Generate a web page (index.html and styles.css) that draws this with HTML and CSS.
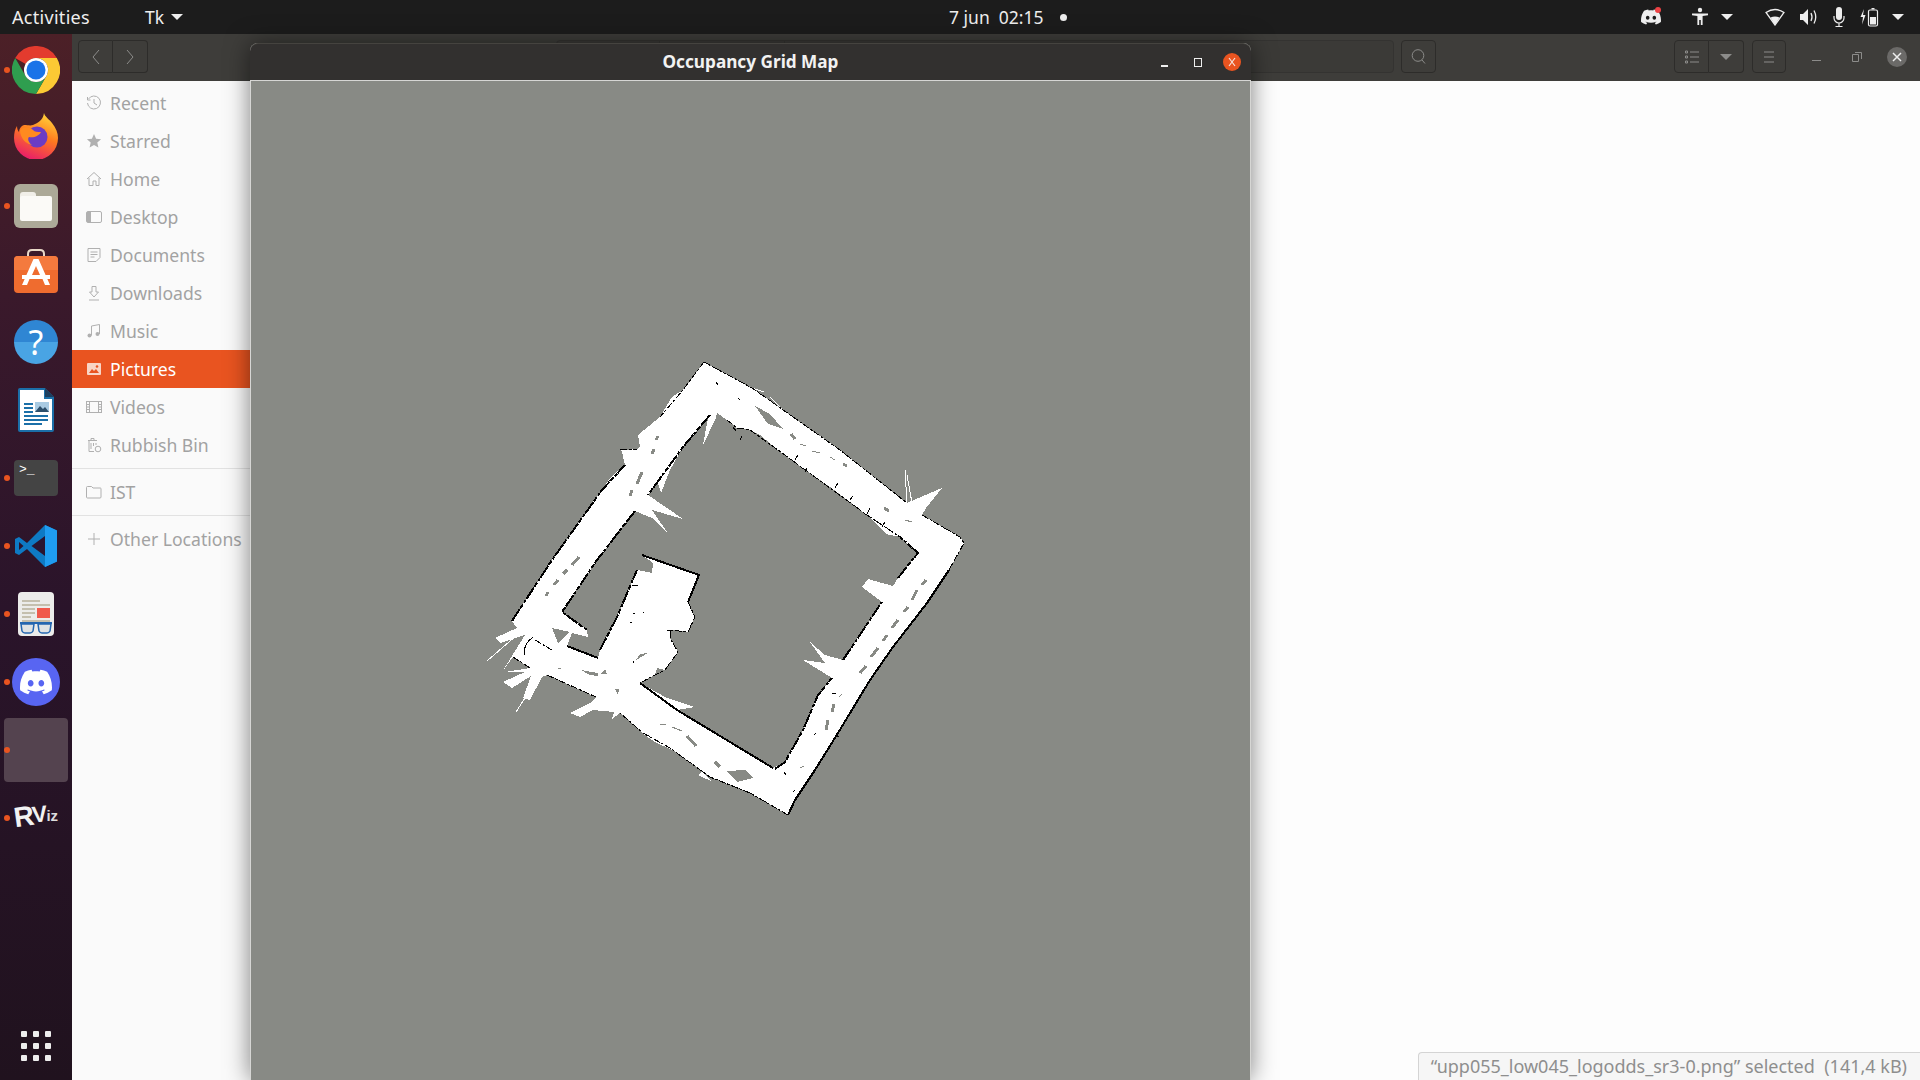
FILE: index.html
```html
<!DOCTYPE html>
<html>
<head>
    <title>Occupancy Grid Map</title>
    <link rel="stylesheet" href="styles.css">
</head>
<body>
    <svg class="defs">
        <symbol id="discord" viewBox="0 0 24 24">
            <path d="M20.317 4.3698a19.7913 19.7913 0 00-4.8851-1.5152.0741.0741 0 00-.0785.0371c-.211.3753-.4447.8648-.6083 1.2495-1.8447-.2762-3.68-.2762-5.4868 0-.1636-.3933-.4058-.8742-.6177-1.2495a.077.077 0 00-.0785-.037 19.7363 19.7363 0 00-4.8852 1.515.0699.0699 0 00-.0321.0277C.5334 9.0458-.319 13.5799.0992 18.0578a.0824.0824 0 00.0312.0561c2.0528 1.5076 4.0413 2.4228 5.9929 3.0294a.0777.0777 0 00.0842-.0276c.4616-.6304.8731-1.2952 1.226-1.9942a.076.076 0 00-.0416-.1057c-.6528-.2476-1.2743-.5495-1.8722-.8923a.077.077 0 01-.0076-.1277c.1258-.0943.2517-.1923.3718-.2914a.0743.0743 0 01.0776-.0105c3.9278 1.7933 8.18 1.7933 12.0614 0a.0739.0739 0 01.0785.0095c.1202.099.246.1981.3728.2924a.077.077 0 01-.0066.1276 12.2986 12.2986 0 01-1.873.8914.0766.0766 0 00-.0407.1067c.3604.698.7719 1.3628 1.225 1.9932a.076.076 0 00.0842.0286c1.961-.6067 3.9495-1.5219 6.0023-3.0294a.077.077 0 00.0313-.0552c.5004-5.177-.8382-9.6739-3.5485-13.6604a.061.061 0 00-.0312-.0286zM8.02 15.3312c-1.1825 0-2.1569-1.0857-2.1569-2.419 0-1.3332.9555-2.4189 2.157-2.4189 1.2108 0 2.1757 1.0952 2.1568 2.419 0 1.3332-.9555 2.4189-2.1569 2.4189zm7.9748 0c-1.1825 0-2.1569-1.0857-2.1569-2.419 0-1.3332.9554-2.4189 2.1569-2.4189 1.2108 0 2.1757 1.0952 2.1568 2.419 0 1.3332-.946 2.4189-2.1568 2.4189Z"/>
        </symbol>
    </svg>

    <div class="topbar">
        <div class="top-left">
            <span class="activities">Activities</span>
            <span class="app-menu">Tk <i class="caret"></i></span>
        </div>
        <div class="clock">7 jun&nbsp; 02:15 <i class="clock-dot"></i></div>
        <div class="tray">
            <span class="tray-discord">
                <svg width="20" height="20" fill="#eee"><use href="#discord"/></svg>
                <i class="tray-badge"></i>
            </span>
            <svg class="tray-access" width="20" height="20" viewBox="0 0 20 20" fill="#eee">
                <circle cx="10" cy="3" r="2.2"/>
                <path d="M2 6.500h16v1.800l-5.400.6V18h-1.800v-5H9.200v5H7.400V8.900L2 8.300z"/>
            </svg>
            <i class="caret tray-caret1"></i>
            <svg class="tray-wifi" width="20" height="18" viewBox="0 0 20 18">
                <path d="M1 4.500Q10-1.500 19 4.500L10 17z" fill="none" stroke="#eee" stroke-width="1.300"/>
                <path d="M5.500 9.500Q10 7.500 14.500 9.500L10 17z" fill="#eee"/>
            </svg>
            <svg class="tray-vol" width="20" height="18" viewBox="0 0 20 18" fill="#eee">
                <path d="M1 6h3l5-5v16l-5-5H1z"/>
                <path d="M12 5q2 4 0 8M15 2.500q3.500 6.500 0 13" fill="none" stroke="#eee" stroke-width="1.300"/>
            </svg>
            <svg class="tray-mic" width="14" height="22" viewBox="0 0 14 22">
                <rect x="4" y="1" width="6" height="13" rx="3" fill="#eee"/>
                <path d="M2 10v2a5 5 0 0 0 10 0v-2M7 17v3M3.500 20.500h7" fill="none" stroke="#eee" stroke-width="1.200"/>
            </svg>
            <svg class="tray-batt" width="24" height="20" viewBox="0 0 24 20">
                <path d="M5 2 1.500 10H4l-1 7.500L6.500 8H4z" fill="#eee"/>
                <path d="M14 1v1.500" stroke="#eee" stroke-width="3"/>
                <rect x="9.500" y="3" width="9" height="16" rx="1.500" fill="none" stroke="#eee" stroke-width="1.200"/>
                <rect x="11" y="10" width="6" height="7.500" fill="#eee"/>
            </svg>
            <i class="caret"></i>
        </div>
    </div>

    <div class="desktop">
        <nav class="dock">
            <div class="dock-item running">
                <svg width="48" height="48" viewBox="0 0 48 48">
                    <path d="M3.200 12A24 24 0 0 1 44.800 12H24A12 12 0 0 0 13.600 18Z" fill="#e33b2e"/>
                    <path d="M44.800 12A24 24 0 0 1 24 48L34.400 30A12 12 0 0 0 24 12Z" fill="#fcc934"/>
                    <path d="M24 48A24 24 0 0 1 3.200 12L13.600 30A12 12 0 0 0 34.400 30Z" fill="#2f9e4f"/>
                    <circle cx="24" cy="24" r="12" fill="#fff"/>
                    <circle cx="24" cy="24" r="9.500" fill="#1a73e8"/>
                </svg>
            </div>
            <div class="dock-item">
                <svg class="lift-fox" width="46" height="46" viewBox="0 0 46 46">
                    <defs>
                        <linearGradient id="fox" x1="0.700" y1="0" x2="0.300" y2="1">
                            <stop offset="0" stop-color="#ffd43a"/>
                            <stop offset="0.450" stop-color="#ff7a1f"/>
                            <stop offset="1" stop-color="#e8186d"/>
                        </linearGradient>
                    </defs>
                    <path d="M31 0c1 4 5 6 8 10 4 5 6 10 6 15a22 22 0 0 1-44 0C1 20 2 16 4 13c0 3 1 5 2 6 0-3 2-6 5-7 4 0 6 1 9 0 4-2 10-4 11-12z" fill="url(#fox)"/>
                    <circle cx="24" cy="24" r="10.500" fill="#6b3cc4"/>
                    <path d="M7 17c4-4 10-3 13 0 2 2 4 2 8 2-2 4-7 6-12 5-2 2 0 6 3 8-6-1-12-7-12-15z" fill="#ff8a1f"/>
                </svg>
            </div>
            <div class="dock-item running">
                <div class="files-tile"><div class="files-tab"></div><div class="files-folder"></div></div>
            </div>
            <div class="dock-item">
                <svg class="lift-store" width="44" height="46" viewBox="0 0 44 46">
                    <path d="M14 11V6q0-4 4-4h8q4 0 4 4v5" fill="none" stroke="#e9d9c8" stroke-width="2"/>
                    <rect y="8" width="44" height="37" rx="4" fill="#ef6c2f"/>
                    <path d="M0 12q0-4 4-4h36q4 0 4 4v10H0z" fill="#f47a3e"/>
                    <path d="M19.500 11h5L36 37h-5l-2.500-6h-13L13 37H8zM22 18l-4 9h8z" fill="#fff"/>
                    <rect x="8" y="27" width="28" height="4" fill="#fff"/>
                </svg>
            </div>
            <div class="dock-item">
                <div class="help-disc">?</div>
            </div>
            <div class="dock-item">
                <svg width="36" height="44" viewBox="0 0 36 44">
                    <path d="M2 0h25l9 9v33q0 2-2 2H2q-2 0-2-2V2q0-2 2-2z" fill="#1b6fa8"/>
                    <path d="M2 2h24v9h8v31H2z" fill="#fff"/>
                    <path d="M27 0l9 9h-9z" fill="#1d3f5e"/>
                    <path d="M6 15h9v2H6zM6 19h9v2H6zM6 23h9v2H6zM6 27h24v2H6zM6 31h24v2H6zM6 35h18v2H6z" fill="#1b6fa8"/>
                    <rect x="17" y="14" width="14" height="10" fill="#a9cbe3"/>
                    <path d="M17 24l5-6 3 3 2-2 4 5z" fill="#2d4f6b"/>
                </svg>
            </div>
            <div class="dock-item running">
                <div class="term-tile">&gt;_</div>
            </div>
            <div class="dock-item running">
                <svg width="42" height="42" viewBox="0 0 42 42">
                    <path d="M30 0l12 5.500v31L30 42 12 24 4 30 0 28V14l4-2 8 6z" fill="#0e7ac4"/>
                    <path d="M30 0l12 5.500v31L30 42z" fill="#1f9cf0"/>
                    <path d="M30 11 16.500 21 30 31z" fill="#2a1530"/>
                    <path d="M4 17l4.500 4L4 25z" fill="#2a1530"/>
                </svg>
            </div>
            <div class="dock-item running">
                <svg width="36" height="44" viewBox="0 0 36 44">
                    <rect width="36" height="44" rx="4" fill="#ececea"/>
                    <path d="M4 8h18v2H4zM4 12h28v2H4zM4 16h13v2H4zM4 20h13v2H4zM4 24h9v2H4zM4 28h28v2H4z" fill="#c4bfae"/>
                    <rect x="19" y="16" width="13" height="10" fill="#f0594c"/>
                    <path d="M2 31h32" stroke="#2467b0" stroke-width="2"/>
                    <path d="M3 32h13l-1 7q-1 2-3 2H7q-2 0-3-2zM20 32h13l-1 7q-1 2-3 2h-5q-2 0-3-2z" fill="#dfe3e4" stroke="#2467b0" stroke-width="1.500"/>
                </svg>
            </div>
            <div class="dock-item running">
                <div class="discord-disc"><svg width="32" height="32" fill="#fff"><use href="#discord"/></svg></div>
            </div>
            <div class="dock-item running active"></div>
            <div class="dock-item running">
                <div class="rviz-logo"><span class="rviz-r">R</span><span class="rviz-v">V</span><span class="rviz-iz">iz</span></div>
            </div>
            <div class="app-grid">
                <i></i><i></i><i></i><i></i><i></i><i></i><i></i><i></i><i></i>
            </div>
        </nav>

        <div class="files">
            <header class="headerbar">
                <div class="btn-group nav-group">
                    <button class="hb-btn"><svg width="10" height="16" viewBox="0 0 10 16"><path d="M8 1 2 8l6 7"/></svg></button>
                    <button class="hb-btn"><svg width="10" height="16" viewBox="0 0 10 16"><path d="M2 1l6 7-6 7"/></svg></button>
                </div>
                <div class="pathbar">
                    <span class="crumb crumb-a"></span><span class="crumb crumb-b"></span><span class="crumb crumb-c"></span>
                </div>
                <button class="hb-btn search-btn">
                    <svg width="16" height="18" viewBox="0 0 16 18"><circle cx="7" cy="7.500" r="5.800"/><path d="M11 12l3 3.500"/></svg>
                </button>
                <div class="btn-group view-group">
                    <button class="hb-btn">
                        <svg width="14" height="14" viewBox="0 0 14 14"><path d="M0.500 1h2v2h-2zM0.500 6h2v2h-2zM0.500 11h2v2h-2zM5 2h9M5 7h9M5 12h9"/></svg>
                    </button>
                    <button class="hb-btn"><i class="caret dim"></i></button>
                </div>
                <button class="hb-btn menu-btn">
                    <svg width="12" height="12" viewBox="0 0 12 12"><path d="M1 1h10M1 6h10M1 11h10"/></svg>
                </button>
                <div class="win-ctl">
                    <i class="ctl-min"></i>
                    <svg class="ctl-max" width="10" height="10" viewBox="0 0 10 10"><path d="M3 0.500h6.500V7M0.500 2.500h6v7h-6z"/></svg>
                    <span class="ctl-close">
                        <svg width="10" height="10" viewBox="0 0 10 10"><path d="M1 1l8 8M9 1l-8 8"/></svg>
                    </span>
                </div>
            </header>

            <div class="files-body">
                <aside class="sidebar">
                    <div class="side-row">
                        <svg viewBox="0 0 16 16"><path d="M2.500 4a6.500 6.500 0 1 1-1 4M1.500 2v3h3M8 4v4l3 2"/></svg>Recent
                    </div>
                    <div class="side-row">
                        <svg viewBox="0 0 16 16"><path class="solid" d="M8 1l2.100 4.700 5 .5-3.800 3.300 1.100 5L8 11.900l-4.400 2.600 1.100-5L.9 6.200l5-.5z"/></svg>Starred
                    </div>
                    <div class="side-row">
                        <svg viewBox="0 0 16 16"><path d="M1 8l7-6.500L15 8M3 7v7.500h4V10h3v4.500h3V7"/></svg>Home
                    </div>
                    <div class="side-row">
                        <svg viewBox="0 0 16 16"><rect x="0.500" y="2.500" width="15" height="11" rx="1.500"/><path class="solid" d="M1 3h4v10H1z"/></svg>Desktop
                    </div>
                    <div class="side-row">
                        <svg viewBox="0 0 16 16"><path d="M2 1.500h12v9l-4 4H2zM4.500 5h7M4.500 7.500h7M4.500 10h4"/></svg>Documents
                    </div>
                    <div class="side-row">
                        <svg viewBox="0 0 16 16"><path d="M6 1.500h4V7h2.500L8 12 3.500 7H6zM3 15h10"/></svg>Downloads
                    </div>
                    <div class="side-row">
                        <svg viewBox="0 0 16 16"><path d="M5.500 12.500V3l8-1.500V11"/><circle class="solid" cx="3.500" cy="12.500" r="2"/><circle class="solid" cx="11.500" cy="11" r="2"/></svg>Music
                    </div>
                    <div class="side-row selected">
                        <svg viewBox="0 0 16 16"><rect x="1" y="2" width="14" height="12" rx="1" class="solid"/><path class="cut" d="M3 12l3-4 2 2 2-2 3 4z"/><circle class="cut" cx="11" cy="5.500" r="1.300"/></svg>Pictures
                    </div>
                    <div class="side-row">
                        <svg viewBox="0 0 16 16"><rect x="0.500" y="2.500" width="15" height="11"/><path d="M3.500 2.500v11M12.500 2.500v11M0.500 5.500h3M0.500 8h3M0.500 10.500h3M12.500 5.500h3M12.500 8h3M12.500 10.500h3"/></svg>Videos
                    </div>
                    <div class="side-row">
                        <svg viewBox="0 0 16 16"><path d="M2 3.500h9M5 3.500v-2h3v2M3 3.500v11h5M5 6v6M7.500 6v3M10 6v2"/><circle cx="12" cy="12" r="2.800"/></svg>Rubbish Bin
                    </div>
                    <div class="side-sep"></div>
                    <div class="side-row">
                        <svg viewBox="0 0 16 16"><path d="M0.500 3.500q0-1 1-1h4l1.500 1.500h7.500q.5 0 .5 1v8q0 1-1 1h-12.500q-1 0-1-1z"/></svg>IST
                    </div>
                    <div class="side-sep"></div>
                    <div class="side-row">
                        <svg viewBox="0 0 16 16"><path d="M8 2v12M2 8h12"/></svg>Other Locations
                    </div>
                </aside>
                <main class="file-view">
                    <div class="status-pill">“upp055_low045_logodds_sr3-0.png” selected&nbsp; (141,4 kB)</div>
                </main>
            </div>
        </div>

        <section class="map-window">
            <div class="map-title">
                <span>Occupancy Grid Map</span>
                <div class="map-ctl">
                    <i class="map-min"></i>
                    <i class="map-max"></i>
                    <span class="map-close"><svg width="8" height="10" viewBox="0 0 8 10"><path d="M1 1l6 8M7 1L1 9"/></svg></span>
                </div>
            </div>
            <svg class="map-canvas" viewBox="251 81 999 999" width="999" height="999">
                <polygon class="free" points="704,362 722,372 752,388 790,415 797,420 840,450 880,482 907,503 942,488 926,508 922,515 960,537 964,543 949,570 927,603 893,647 870,680 838,733 815,770 795,800 788,815 750,793 710,777 670,748 643,733 620,713 612,719 614,712 593,710 580,717 570,713 590,703 596,697 547,675 542,677 530,700 523,698 531,676 512,688 503,682 525,672 505,672 530,668 513,657 502,672 525,635 500,643 495,638 517,628 512,621 552,560 565,543 585,513 602,490 610,478 625,465 622,452 620,450 637,449 640,447 638,435 660,417 672,397 683,390"/>
                <polygon class="free" points="642,733 660,736 672,750 655,742"/>
                <polygon class="free" points="702,772 713,782 698,775"/>
                <polyline class="ray" points="907,503 905,470"/>
                <polyline class="ray" points="912,503 907,475"/>
                <polyline class="ray" points="525,628 487,661"/>
                <polyline class="ray" points="530,690 516,712"/>
                <polyline class="ray" points="745,386 764,392"/>
                <polyline class="ray" points="785,412 770,397"/>
                <polyline class="ray" points="782,412 768,399"/>
                <polyline class="ray" points="602,490 600,498"/>
                <polyline class="ray" points="588,520 592,505"/>
                <polygon class="unknown" points="717,413 716,418 703,445 708,418 710,415 683,447 670,470 661,493 658,483 648,495 683,519 652,510 669,535 652,518 635,511 597,560 562,612 587,630 588,637 572,633 567,646 598,658 600,650 617,617 637,570 652,573 653,563 642,555 699,575 688,602 695,617 688,632 670,630 670,638 678,652 665,670 657,668 655,675 640,683 667,698 695,707 677,710 773,768 785,762 803,730 818,695 832,678 803,660 825,663 810,642 825,655 843,660 882,602 862,587 868,579 893,586 898,578 918,553 900,537 886,534 882,530 867,515 830,487 795,463 778,450 760,435 750,430 737,428 727,420"/>

                <!-- unseen cells left in the corridors -->
                <polygon class="unknown" points="755,406 770,414 783,429 768,424"/>
                <polygon class="unknown" points="552,628 570,632 558,643"/>
                <polygon class="unknown" points="581,670 598,673 598,676 590,675"/>
                <polygon class="unknown" points="636,660 640,654 648,653"/>
                <polygon class="unknown" points="727,771 745,770 753,778 737,782"/>
                <polygon class="unknown" points="601,674 605,669 607,674"/>
                <polygon class="unknown" points="615,689 619,689 618,695"/>
                <polyline class="gap" points="658,436 656,440"/>
                <polyline class="gap" points="654,449 652,454"/>
                <polyline class="gap" points="642,472 637,484"/>
                <polyline class="gap" points="632,490 630,496"/>
                <polyline class="gap" points="579,557 572,565"/>
                <polyline class="gap" points="567,570 563,574"/>
                <polyline class="gap" points="558,580 554,585"/>
                <polyline class="gap" points="548,592 546,596"/>
                <polyline class="gap" points="791,434 795,439"/>
                <polyline class="gap-thin" points="800,444 806,446"/>
                <polyline class="gap-thin" points="812,451 820,453"/>
                <polyline class="gap-thin" points="830,457 835,460"/>
                <polyline class="gap" points="843,464 847,466"/>
                <polyline class="gap" points="884,508 889,511"/>
                <polyline class="gap-thin" points="905,520 912,522"/>
                <polyline class="gap-thin" points="660,724 666,725"/>
                <polyline class="gap-thin" points="672,727 682,731"/>
                <polyline class="gap" points="687,736 696,746"/>
                <polyline class="gap" points="715,762 720,767"/>
                <polyline class="gap-thin" points="558,668 561,669"/>
                <polyline class="gap" points="926,580 922,585"/>
                <polyline class="gap" points="917,590 912,600"/>
                <polyline class="gap" points="908,607 904,612"/>
                <polyline class="gap" points="898,620 892,628"/>
                <polyline class="gap" points="887,635 883,641"/>
                <polyline class="gap" points="878,648 871,657"/>
                <polyline class="gap" points="866,666 860,673"/>
                <polyline class="gap-thin" points="842,694 839,697"/>
                <polyline class="gap" points="834,704 832,712"/>
                <polyline class="gap" points="828,720 826,730"/>
                <polyline class="gap-thin" points="804,766 800,768"/>

                <!-- walls -->
                <polyline class="wall" points="949,570 927,603 893,647 870,680 838,733 815,770 795,800 788,815"/>
                <polyline class="wall-rough" points="512,621 552,560 602,490 625,465"/>
                <polyline class="wall-rough" points="635,511 597,560 562,612 587,630"/>
                <polyline class="wall" points="567,646 598,658"/>
                <polyline class="wall" points="642,555 699,575 688,602"/>
                <polyline class="wall-rough" points="600,650 617,617 637,570"/>
                <polyline class="wall" points="640,683 677,710 773,768"/>
                <polyline class="wall-rough" points="843,660 882,602"/>
                <polyline class="wall-rough" points="898,578 918,553 900,537"/>
                <polyline class="wall-rough" points="775,769 785,762 803,730 818,695 832,678"/>
                <polyline class="wall-rough" points="710,415 683,447 648,495"/>
                <polyline class="wall-thin" points="727,420 737,428 750,430"/>
                <polyline class="wall-thin" points="704,362 683,390 660,417"/>
                <polyline class="wall-thin" points="704,362 752,388 840,450 907,503"/>
                <polyline class="wall-thin" points="922,515 960,537 964,543 949,570"/>
                <polyline class="wall-thin" points="750,430 778,450 867,515 900,537"/>
                <polyline class="wall-thin" points="750,793 710,777 670,748 643,733 620,713"/>
                <polyline class="wall-thin" points="788,815 750,793"/>
                <polyline class="wall-thin" points="547,675 596,697"/>
                <polyline class="wall-thin" points="620,450 637,449"/>
                <polyline class="wall-thin" points="688,602 695,617 688,632 670,630 670,638 678,652 665,670 655,675 640,683"/>
                <polyline class="wall-thin" points="530,668 513,657"/>
                <polyline class="wall-thin" points="535,640 552,650"/>
                <path class="speck" d="M533 637Q522 645 525 655"/>
                <path class="speck" d="M798 455l-3 5M807 468l-2 4M838 483l-3 5M853 496l-3 4M870 508l-3 6M885 522l-3 5M742 436l-2 4M733 427l3 4"/>
                <path class="speck" d="M633 613h2M630 622h2M632 585h6M667 630h3M643 612h1M633 661l1 2M716 382l2 3M738 398l2 2"/>
                <path class="speck" d="M832 693l4 1M835 736l4 1M814 735l2-2M795 790l-2 2M784 772l2 3"/>
            </svg>
        </section>
    </div>
</body>
</html>
```

FILE: styles.css
```css
html, body {
    margin: 0;
    padding: 0;
}

body {
    width: 1920px;
    height: 1080px;
    overflow: hidden;
    font-family: "Noto Sans", sans-serif;
    display: flex;
    flex-direction: column;
    background: #fff;
}

.defs {
    display: none;
}

i {
    display: block;
}

.topbar {
    height: 34px;
    flex: none;
    background: #1c1c1c;
    color: #eee;
    font-size: 17.500px;
    display: flex;
    align-items: center;
    padding: 0 16px 0 12px;
    position: relative;
}

.top-left {
    display: flex;
    align-items: center;
    width: 937px;
}

.activities {
    width: 133px;
    font-size: 18px;
    letter-spacing: 0.300px;
}

.app-menu {
    display: flex;
    align-items: center;
    gap: 7px;
}

.caret {
    width: 0;
    height: 0;
    border-left: 6px solid transparent;
    border-right: 6px solid transparent;
    border-top: 6px solid #eee;
}

.caret.dim {
    border-top-color: #8c8c8a;
}

.clock {
    display: flex;
    align-items: center;
    gap: 12px;
    white-space: pre;
}

.clock-dot {
    width: 7px;
    height: 7px;
    border-radius: 50%;
    background: #eee;
}

.tray {
    margin-left: auto;
    display: flex;
    align-items: center;
}

.tray-discord {
    position: relative;
    display: flex;
    margin-right: 29px;
}

.tray-badge {
    position: absolute;
    top: 0;
    right: 0;
    width: 6px;
    height: 6px;
    border-radius: 50%;
    background: #ed4245;
}

.tray-caret1 {
    margin: 0 32px 0 11px;
}

.tray-vol {
    margin-left: 14px;
}

.tray-mic {
    margin-left: 13px;
}

.tray-batt {
    margin: 0 9px 0 13px;
}

.desktop {
    flex: 1;
    display: flex;
    min-height: 0;
    position: relative;
}

.dock {
    width: 72px;
    flex: none;
    padding-top: 2px;
    box-sizing: border-box;
    display: flex;
    flex-direction: column;
    align-items: center;
    position: relative;
    background: linear-gradient(180deg, #4c2027 0%, #3a192b 25%, #2a142a 55%, #20121e 100%);
}

.dock-item {
    width: 72px;
    height: 68px;
    flex: none;
    display: flex;
    align-items: center;
    justify-content: center;
    position: relative;
}

.dock-item.running::before {
    content: "";
    position: absolute;
    left: 4px;
    top: 31px;
    width: 6px;
    height: 6px;
    border-radius: 50%;
    background: #e95420;
}

.dock-item.active::after {
    content: "";
    width: 64px;
    height: 64px;
    border-radius: 4px;
    background: #54434f;
}

.dock-item.active::before {
    z-index: 1;
}

.lift-fox {
    margin-bottom: 4px;
}

.lift-store {
    margin-bottom: 6px;
}

.files-tile {
    width: 44px;
    height: 44px;
    border-radius: 6px;
    background: #aca998;
    position: relative;
}

.files-tab {
    position: absolute;
    left: 6px;
    top: 8px;
    width: 16px;
    height: 8px;
    border-radius: 3px 3px 0 0;
    background: #f1efe9;
}

.files-folder {
    position: absolute;
    left: 6px;
    top: 12px;
    width: 32px;
    height: 25px;
    border-radius: 2px;
    background: #fbfaf7;
}

.help-disc {
    width: 44px;
    height: 44px;
    border-radius: 50%;
    background: linear-gradient(180deg, #2f86d3 50%, #49a4e4 50%);
    color: #fff;
    font: 34px/44px "Noto Sans", sans-serif;
    text-align: center;
}

.term-tile {
    width: 44px;
    height: 36px;
    border-radius: 4px;
    background: #444;
    color: #fff;
    font: 13px/14px "Liberation Mono", monospace;
    padding: 3px 0 0 5px;
    box-sizing: border-box;
}

.discord-disc {
    width: 48px;
    height: 48px;
    border-radius: 50%;
    background: #5865f2;
    display: flex;
    align-items: center;
    justify-content: center;
}

.rviz-logo {
    color: #f2f2f2;
    font-family: "Liberation Sans", sans-serif;
    font-weight: bold;
    display: flex;
    align-items: flex-start;
    line-height: 1;
    transform: translateY(-1px);
}

.rviz-r {
    font-size: 28px;
    transform: rotate(-8deg);
}

.rviz-v {
    font-size: 23px;
    margin-left: -2px;
    transform: rotate(-6deg);
}

.rviz-iz {
    font-size: 15px;
    margin: 5px 0 0 -1px;
    color: #ddd;
}

.app-grid {
    position: absolute;
    left: 21px;
    bottom: 19px;
    display: grid;
    grid-template-columns: repeat(3, 6px);
    grid-auto-rows: 6px;
    gap: 6px;
}

.app-grid i {
    background: #eee;
    border-radius: 1px;
}

.files {
    flex: 1;
    display: flex;
    flex-direction: column;
    min-width: 0;
}

.headerbar {
    height: 47px;
    flex: none;
    background: #3e3d3a;
    display: flex;
    align-items: flex-start;
    padding: 6px 0 0 6px;
    box-sizing: border-box;
}

.hb-btn {
    height: 33px;
    padding: 0;
    background: none;
    border: 1px solid #2d2c2a;
    border-radius: 4px;
    display: flex;
    align-items: center;
    justify-content: center;
}

.hb-btn svg,
.win-ctl svg {
    fill: none;
    stroke: #8c8c8a;
    stroke-width: 1;
}

.btn-group {
    display: flex;
}

.btn-group .hb-btn:first-child {
    border-radius: 4px 0 0 4px;
}

.btn-group .hb-btn:last-child {
    border-radius: 0 4px 4px 0;
    border-left: none;
}

.nav-group .hb-btn {
    width: 35px;
}

.pathbar {
    display: flex;
    height: 33px;
    margin-left: 408px;
    border: 1px solid #343331;
    border-radius: 4px;
    box-sizing: border-box;
    width: 838px;
    margin-right: 7px;
    background: #3b3a37;
}

.crumb {
    border-right: 1px solid #353431;
}

.crumb-a {
    width: 102px;
}

.crumb-b {
    width: 124px;
}

.crumb-c {
    flex: 1;
    border-right: none;
}

.search-btn {
    width: 35px;
}

.view-group {
    margin-left: 238px;
}

.view-group .hb-btn {
    width: 35px;
}

.menu-btn {
    width: 34px;
    margin-left: 8px;
}

.win-ctl {
    display: flex;
    align-items: center;
    height: 33px;
    position: relative;
    flex: 1;
}

.ctl-min {
    width: 9px;
    height: 1px;
    background: #8c8c8a;
    margin: 8px 0 0 26px;
}

.ctl-max {
    margin-left: 31px;
}

.ctl-close {
    width: 20px;
    height: 20px;
    border-radius: 50%;
    background: #6b6a68;
    margin-left: 25px;
    display: flex;
    align-items: center;
    justify-content: center;
}

.ctl-close svg {
    stroke: #eee;
    stroke-width: 1.500;
}

.files-body {
    flex: 1;
    display: flex;
    min-height: 0;
}

.sidebar {
    width: 178px;
    flex: none;
    background: #fafafa;
    padding-top: 3px;
    box-sizing: border-box;
}

.side-row {
    height: 38px;
    display: flex;
    align-items: center;
    gap: 8px;
    padding-left: 14px;
    color: #a2a2a2;
    font-size: 17.600px;
    white-space: nowrap;
}

.side-row svg {
    width: 16px;
    height: 16px;
    flex: none;
    fill: none;
    stroke: #b0b0b0;
    stroke-width: 1;
}

.side-row .solid {
    fill: #b0b0b0;
    stroke: none;
}

.side-row.selected {
    background: #e95420;
    color: #fff;
}

.side-row.selected .solid {
    fill: #f8d5c6;
}

.side-row.selected .cut {
    fill: #e95420;
    stroke: none;
}

.side-sep {
    height: 1px;
    background: #e2e2e2;
    margin: 4px 0;
}

.file-view {
    flex: 1;
    background: #fdfdfd;
    position: relative;
}

.status-pill {
    position: absolute;
    right: 0;
    bottom: 0;
    height: 28px;
    box-sizing: border-box;
    padding: 0 13px 0 12px;
    background: #f6f6f6;
    border: 1px solid #d4d4d4;
    border-width: 1px 0 0 1px;
    border-radius: 4px 0 0 0;
    color: #8e8e8e;
    font-size: 18px;
    line-height: 27px;
    white-space: nowrap;
}

/* the Tk window floats over the file manager */
.map-window {
    position: absolute;
    left: 250px;
    top: 9px;
    width: 1001px;
    height: 1037px;
    box-sizing: border-box;
    border-radius: 8px 8px 0 0;
    background: #d6d6d4;
    box-shadow: 0 0 24px rgba(0, 0, 0, 0.5);
    display: flex;
    flex-direction: column;
    align-items: center;
}

.map-title {
    width: 100%;
    height: 37px;
    flex: none;
    background: #32302f;
    border-top: 1px solid #45433f;
    border-radius: 8px 8px 0 0;
    box-sizing: border-box;
    padding-bottom: 2px;
    color: #f2f2f2;
    font-size: 17.200px;
    font-weight: 700;
    display: flex;
    align-items: center;
    justify-content: center;
    position: relative;
}

.map-ctl {
    position: absolute;
    right: 10px;
    top: 8px;
    display: flex;
    align-items: center;
    height: 20px;
}

.map-min {
    width: 7px;
    height: 2px;
    background: #eee;
    margin-top: 8px;
}

.map-max {
    width: 6px;
    height: 7px;
    border: 1.500px solid #eee;
    margin-left: 26px;
}

.map-close {
    width: 18px;
    height: 18px;
    border-radius: 50%;
    background: #e95420;
    margin-left: 21px;
    display: flex;
    align-items: center;
    justify-content: center;
}

.map-close svg {
    fill: none;
    stroke: #f6e3dc;
    stroke-width: 1.200;
}

.map-canvas {
    display: block;
    flex: none;
    margin-top: 1px;
    background: #888a85;
    shape-rendering: crispEdges;
}

.free {
    fill: #fff;
}

.unknown {
    fill: #888a85;
}

.ray {
    fill: none;
    stroke: #fff;
    stroke-width: 1;
}

.gap {
    fill: none;
    stroke: #888a85;
    stroke-width: 3;
}

.gap-thin {
    fill: none;
    stroke: #888a85;
    stroke-width: 1;
}

.wall {
    fill: none;
    stroke: #000;
    stroke-width: 2;
}

.wall-rough {
    fill: none;
    stroke: #000;
    stroke-width: 2;
    stroke-dasharray: 14 1 5 2 3 1;
}

.wall-thin {
    fill: none;
    stroke: #000;
    stroke-width: 1;
    stroke-dasharray: 7 2 3 1;
}

.speck {
    fill: none;
    stroke: #000;
    stroke-width: 1;
}
```
